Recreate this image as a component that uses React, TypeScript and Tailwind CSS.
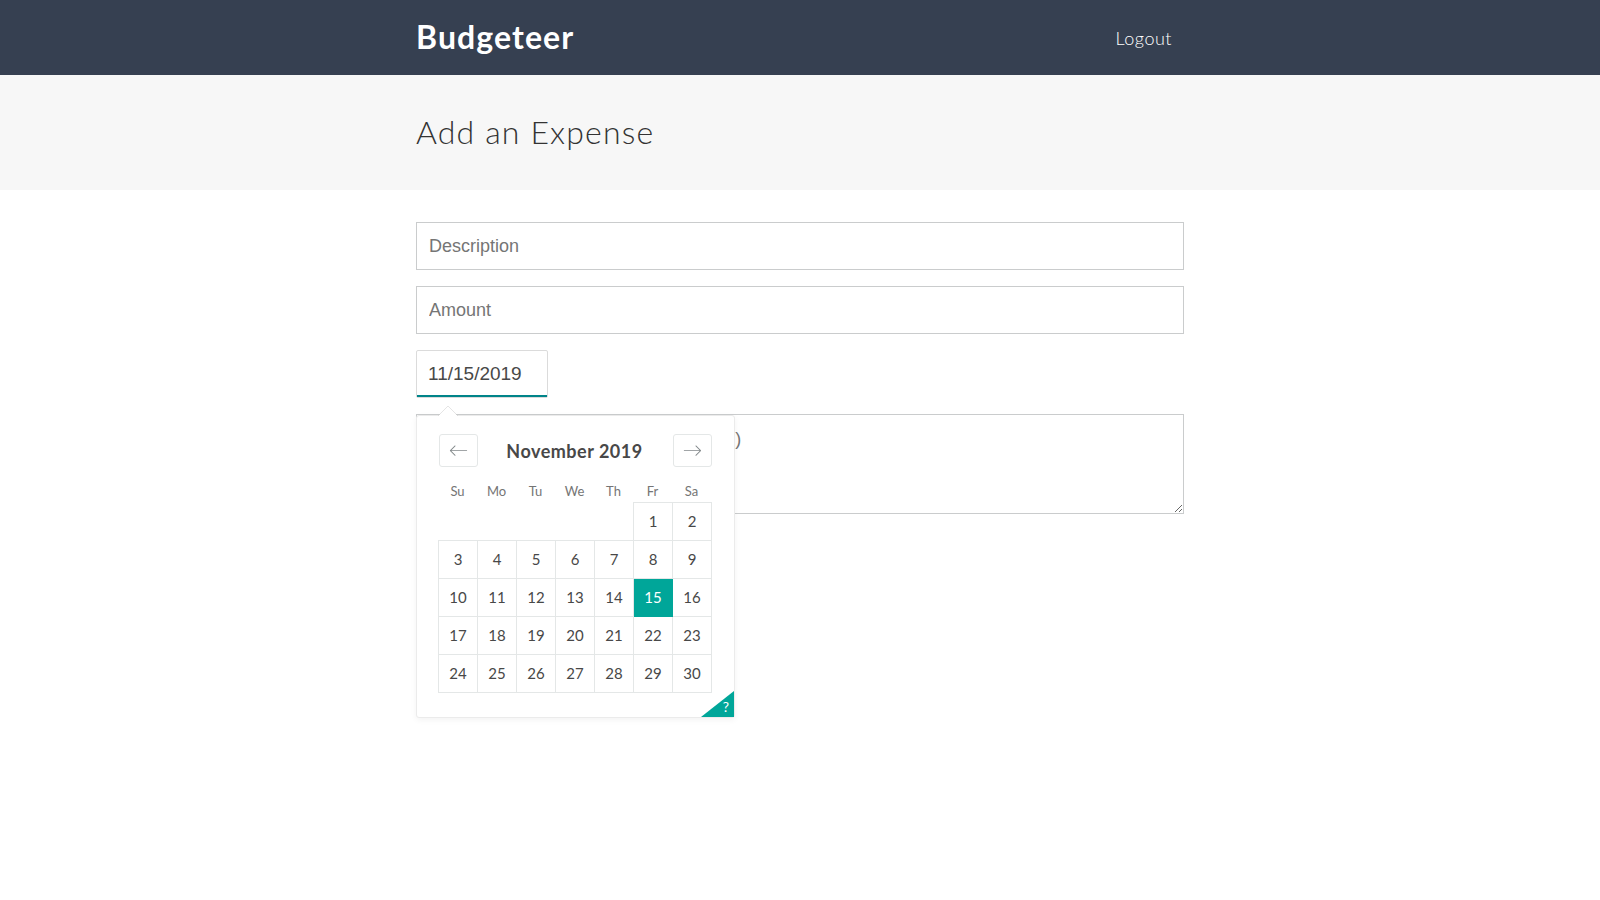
import React from "react";

const rows: (number | null)[][] = [
  [null, null, null, null, null, 1, 2],
  [3, 4, 5, 6, 7, 8, 9],
  [10, 11, 12, 13, 14, 15, 16],
  [17, 18, 19, 20, 21, 22, 23],
  [24, 25, 26, 27, 28, 29, 30],
];

const weekdays = ["Su", "Mo", "Tu", "We", "Th", "Fr", "Sa"];

function ArrowLeft() {
  return (
    <svg viewBox="0 0 1000 1000" width="19" height="19" className="fill-[#82888a]">
      <path d="M336.2 274.5l-210.1 210h805.4c13 0 23 10 23 23s-10 23-23 23H126.1l210.1 210.1c11 11 11 21 0 32-5 5-10 7-16 7s-11-2-16-7l-249.1-249c-11-11-11-21 0-32l249.1-249.1c21-21.1 53 10.9 32 32z" />
    </svg>
  );
}

function ArrowRight() {
  return (
    <svg viewBox="0 0 1000 1000" width="19" height="19" className="fill-[#82888a]">
      <path d="M694.4 242.4l249.1 249.1c11 11 11 21 0 32L694.4 772.7c-5 5-10 7-16 7s-11-2-16-7c-11-11-11-21 0-32l210.1-210.1H67.1c-13 0-23-10-23-23s10-23 23-23h805.4L662.4 274.5c-21-21.1 11-53.1 32-32.1z" />
    </svg>
  );
}

function Calendar() {
  return (
    <div className="absolute left-0 top-[65px] z-10 w-[319px] rounded-[3px] border border-[#ebebeb] bg-white pb-[24px] pl-[21px] pr-[23px] shadow-[0_2px_6px_rgba(0,0,0,0.05)]">
      <div className="relative flex h-[66px] items-center justify-center pt-[5px]">
        <button className="absolute left-px top-[18px] flex h-[33px] w-[39px] items-center justify-center rounded-[3px] border border-[#e4e7e7] bg-white">
          <ArrowLeft />
        </button>
        <div className="text-[18px] font-bold tracking-[0.5px] text-[#484848]">November 2019</div>
        <button className="absolute right-[-1px] top-[18px] flex h-[33px] w-[39px] items-center justify-center rounded-[3px] border border-[#e4e7e7] bg-white">
          <ArrowRight />
        </button>
      </div>
      <div className="grid h-[20px] grid-cols-[repeat(7,39px)] pt-[1px]">
        {weekdays.map((d) => (
          <div key={d} className="text-center text-[13px] leading-[16px] text-[#757575]">
            {d}
          </div>
        ))}
      </div>
      <table className="w-[273px] table-fixed border-collapse">
        <tbody>
          {rows.map((r, i) => (
            <tr key={i}>
              {r.map((d, j) =>
                d === null ? (
                  <td key={j} className="h-[38px] w-[39px] p-0" />
                ) : d === 15 ? (
                  <td
                    key={j}
                    className="h-[38px] w-[39px] border border-[#00a699] bg-[#00a699] p-0 text-center text-[15px] text-white"
                  >
                    {d}
                  </td>
                ) : (
                  <td
                    key={j}
                    className="h-[38px] w-[39px] border border-[#e4e7e7] p-0 text-center text-[15px] text-[#484848]"
                  >
                    {d}
                  </td>
                )
              )}
            </tr>
          ))}
        </tbody>
      </table>
      <div className="absolute bottom-0 right-0 h-0 w-0 border-r-[33px] border-t-[26px] border-r-[#00a699] border-t-transparent" />
      <div className="absolute bottom-[2px] right-[5px] text-[14px] leading-[16px] text-white">?</div>
    </div>
  );
}

export default function App() {
  return (
    <div className="min-h-[900px] bg-white font-['Lato',sans-serif] text-[#333]">
      <header className="h-[75px] bg-[#364051]">
        <div className="mx-auto flex h-full max-w-[800px] items-center justify-between px-4">
          <h1 className="pb-[2px] text-[32px] font-bold leading-none tracking-[1.1px] text-white">Budgeteer</h1>
          <button className="px-3 pt-[2px] text-[18px] font-light tracking-[0.5px] text-white">Logout</button>
        </div>
      </header>
      <div className="flex h-[115px] items-center bg-[#f7f7f7]">
        <div className="mx-auto w-full max-w-[800px] px-4">
          <h1 className="pb-[2px] text-[32px] font-light leading-none tracking-[1.15px] text-[#333]">Add an Expense</h1>
        </div>
      </div>
      <div className="mx-auto max-w-[800px] px-4 pt-[32px]">
        <input
          type="text"
          placeholder="Description"
          className="mb-4 block h-[48px] w-full border border-[#cacccd] px-3 font-['Liberation_Sans',Arial,sans-serif] text-[18px] text-[#333] outline-none placeholder:text-[#757575]"
        />
        <input
          type="text"
          placeholder="Amount"
          className="mb-4 block h-[48px] w-full border border-[#cacccd] px-3 font-['Liberation_Sans',Arial,sans-serif] text-[18px] text-[#333] outline-none placeholder:text-[#757575]"
        />
        <div className="relative mb-4 w-[132px]">
          <div className="rounded-[2px] border border-[#dbdbdb] bg-white">
            <input
              type="text"
              defaultValue="11/15/2019"
              className="block w-[130px] border-b-2 border-[#008489] px-[11px] pb-[9px] pt-[11px] font-['Liberation_Sans',Arial,sans-serif] text-[19px] leading-[24px] text-[#484848] outline-none"
            />
          </div>
          <svg
            width="20"
            height="10"
            className="absolute left-[22px] top-[56px] z-20"
          >
            <path d="M0,10 20,10 10,0z" fill="#fff" />
            <path d="M0,10 10,0 20,10" stroke="rgba(0,0,0,0.1)" fill="transparent" />
          </svg>
          <Calendar />
        </div>
        <textarea
          placeholder="Add a note for your expense (optional)"
          className="block h-[100px] w-full border border-[#cacccd] pl-[18px] pr-3 pt-[11px] font-['Liberation_Sans',Arial,sans-serif] text-[18px] text-[#333] outline-none placeholder:text-[#757575]"
        />
      </div>
    </div>
  );
}
